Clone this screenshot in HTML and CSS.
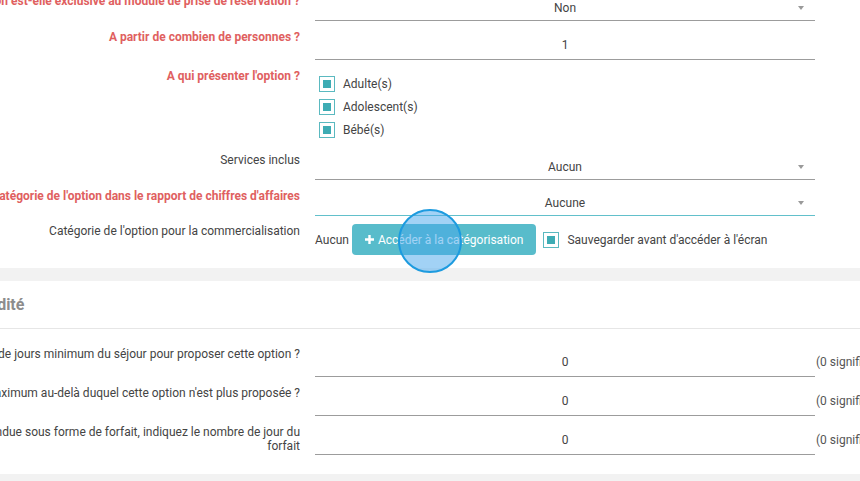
FILE: index.html
```html
<!DOCTYPE html>
<html lang="fr">
<head>
  <meta charset="UTF-8">
  <title>Option - paramètres</title>
  <link rel="stylesheet" href="styles.css">
</head>
<body>

  <div class="page">

    <section class="panel panel-top">
      <div class="row">
        <label class="label required">L'option est-elle exclusive au module de prise de réservation ?</label>
        <div class="field select">Non</div>
      </div>
      <div class="row">
        <label class="label required">A partir de combien de personnes ?</label>
        <div class="field input">1</div>
      </div>
      <div class="row">
        <label class="label required">A qui présenter l'option ?</label>
        <div class="checks">
          <div class="check"><span class="box"></span>Adulte(s)</div>
          <div class="check"><span class="box"></span>Adolescent(s)</div>
          <div class="check"><span class="box"></span>Bébé(s)</div>
        </div>
      </div>
      <div class="row">
        <label class="label">Services inclus</label>
        <div class="field select">Aucun</div>
      </div>
      <div class="row">
        <label class="label required">Catégorie de l'option dans le rapport de chiffres d'affaires</label>
        <div class="field select focus">Aucune</div>
      </div>
      <div class="row row-actions">
        <label class="label">Catégorie de l'option pour la commercialisation</label>
        <div class="actions">
          <span class="value">Aucun</span>
          <button class="btn">
            <svg width="9" height="9" viewBox="0 0 9 9"><path d="M3.3 0h2.4v3.3H9v2.4H5.7V9H3.3V5.7H0V3.3h3.3z" fill="#fff"/></svg>
            Accéder à la catégorisation
          </button>
          <div class="check check-save"><span class="box"></span>Sauvegarder avant d'accéder à l'écran</div>
        </div>
      </div>
    </section>

    <section class="panel">
      <h2 class="panel-title">Validité</h2>
      <div class="panel-body">
        <div class="row">
          <label class="label">Nombre de jours minimum du séjour pour proposer cette option ?</label>
          <div class="field input">0</div>
          <span class="suffix">(0 signifie aucune limite)</span>
        </div>
        <div class="row">
          <label class="label">Nombre de jours maximum au-delà duquel cette option n'est plus proposée ?</label>
          <div class="field input">0</div>
          <span class="suffix">(0 signifie aucune limite)</span>
        </div>
        <div class="row">
          <label class="label">Si l'option est vendue sous forme de forfait, indiquez le nombre de jour du<br>forfait</label>
          <div class="field input">0</div>
          <span class="suffix">(0 signifie aucun forfait)</span>
        </div>
      </div>
    </section>

  </div>

  <div class="click-ring"></div>

</body>
</html>
```

FILE: styles.css
```css
body {
  margin: 0;
  background: #f2f2f2;
  font-family: Roboto, 'Liberation Sans', sans-serif;
  font-size: 12px;
  color: #444;
  overflow: hidden;
  position: relative;
  height: 481px;
}

/* la page est scrollée horizontalement : le début des libellés est hors champ */
.page {
  width: 1300px;
  margin-left: -200px;
  margin-top: -4px;
}

.panel {
  background: #fff;
}

.panel-top {
  padding-bottom: 13px;
  margin-bottom: 13px;
}

.panel-title {
  margin: 0;
  height: 47px;
  line-height: 47px;
  padding-left: 170px;
  font-size: 16px;
  font-weight: bold;
  color: #8c8c8c;
  border-bottom: 1px solid #e6e6e6;
}

.panel-body {
  padding: 20px 0 19px;
}

.row {
  display: flex;
  align-items: flex-start;
  margin-bottom: 11px;
}

.row:last-child {
  margin-bottom: 0;
}

.row-actions {
  margin-top: -3px;
}

.label {
  width: 500px;
  flex-shrink: 0;
  margin-top: -2px;
  margin-right: 15px;
  text-align: right;
  line-height: 14px;
  white-space: nowrap;
  color: #444;
}

.row-actions .label {
  margin-top: 0;
}

.label.required {
  color: #e06060;
  font-weight: bold;
}

.field {
  width: 500px;
  flex-shrink: 0;
  text-align: center;
  border-bottom: 1px solid #9c9c9c;
  position: relative;
}

.field.input {
  height: 27px;
  line-height: 27px;
}

.field.select {
  height: 24px;
  line-height: 24px;
}

.field.select::after {
  content: "";
  position: absolute;
  right: 11px;
  top: 10px;
  border-width: 4px 3px 0 3px;
  border-style: solid;
  border-color: #9a9a9a transparent transparent transparent;
}

.field.focus {
  border-bottom-color: #62c0cb;
}

.suffix {
  padding-left: 1px;
  line-height: 27px;
  white-space: nowrap;
  color: #555;
}

.checks {
  padding: 1px 0 3px;
}

.check {
  display: flex;
  align-items: center;
  height: 23px;
  white-space: nowrap;
}

.checks .check .box {
  margin-left: 4px;
}

.box {
  width: 14px;
  height: 14px;
  border: 1px solid #5bb9c0;
  margin-right: 8px;
  display: flex;
  justify-content: center;
  align-items: center;
}

.box::after {
  content: "";
  width: 8px;
  height: 8px;
  background: #3eacb4;
}

.actions {
  display: flex;
  align-items: center;
  height: 31px;
}

.value {
  margin-right: 3px;
}

.btn {
  height: 31px;
  border: none;
  border-radius: 4px;
  background: #58bccb;
  color: #fff;
  font-family: inherit;
  font-size: 12px;
  white-space: nowrap;
  display: flex;
  align-items: center;
  gap: 4px;
  padding: 0 13px;
  cursor: pointer;
}

.check-save {
  margin-left: 7px;
}

.click-ring {
  position: absolute;
  left: 398px;
  top: 209px;
  width: 60px;
  height: 60px;
  border: 2px solid #1d9bdf;
  border-radius: 50%;
  background: rgba(70, 165, 235, 0.5);
}
```
